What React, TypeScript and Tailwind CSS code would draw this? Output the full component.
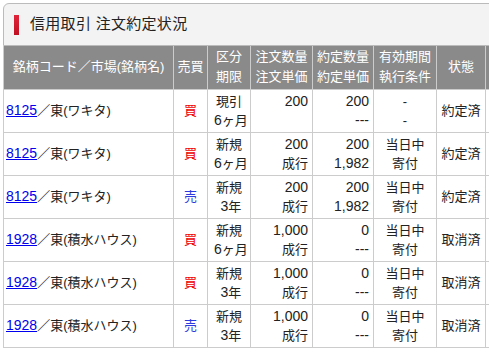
import React from "react";

type Row = {
  code: string;
  name: string;
  side: "買" | "売";
  kind: [string, string];
  qty: [string, string];
  done: [string, string];
  cond: [string, string];
  status: string;
};

const rows: Row[] = [
  { code: "8125", name: "東(ワキタ)", side: "買", kind: ["現引", "6ヶ月"], qty: ["200", ""], done: ["200", "---"], cond: ["-", "-"], status: "約定済" },
  { code: "8125", name: "東(ワキタ)", side: "買", kind: ["新規", "6ヶ月"], qty: ["200", "成行"], done: ["200", "1,982"], cond: ["当日中", "寄付"], status: "約定済" },
  { code: "8125", name: "東(ワキタ)", side: "売", kind: ["新規", "3年"], qty: ["200", "成行"], done: ["200", "1,982"], cond: ["当日中", "寄付"], status: "約定済" },
  { code: "1928", name: "東(積水ハウス)", side: "買", kind: ["新規", "6ヶ月"], qty: ["1,000", "成行"], done: ["0", "---"], cond: ["当日中", "寄付"], status: "取消済" },
  { code: "1928", name: "東(積水ハウス)", side: "買", kind: ["新規", "3年"], qty: ["1,000", "成行"], done: ["0", "---"], cond: ["当日中", "寄付"], status: "取消済" },
  { code: "1928", name: "東(積水ハウス)", side: "売", kind: ["新規", "3年"], qty: ["1,000", "成行"], done: ["0", "---"], cond: ["当日中", "寄付"], status: "取消済" },
];

const th = "border border-[#cccccc] bg-[#8a8a8a] text-white font-normal text-center align-middle px-[2px] leading-[20px]";
const td = "border border-[#cccccc] align-middle leading-[19px] text-[#222222]";

function T({ s }: { s: string }) {
  if (!s) return <>{"\u00a0"}</>;
  if (/^[\x00-\x7f]+$/.test(s)) return <span className="text-[14px]">{s}</span>;
  return <>{s}</>;
}

export default function App() {
  return (
    <div
      className="w-[489px] h-[352px] overflow-hidden bg-white pt-[3px] pl-[3px]"
      style={{ fontFamily: '"Liberation Sans", "Noto Sans CJK JP", sans-serif' }}
    >
      <div className="w-[560px]">
        <div className="h-[43px] border border-[#bbbbbb] rounded-tl-[6px] bg-[#f3f3f3] flex items-center pl-[10px] gap-[11px]">
          <div className="w-[5px] h-[20px] bg-gradient-to-b from-[#e0243a] to-[#c00f22]" />
          <span className="text-[15px] text-[#222222] tracking-[0.3px]">信用取引 注文約定状況</span>
        </div>
        <table className="table-fixed border-collapse text-[13px]" style={{ width: 553 }}>
          <colgroup>
            <col className="w-[170px]" />
            <col className="w-[34px]" />
            <col className="w-[43px]" />
            <col className="w-[62px]" />
            <col className="w-[61px]" />
            <col className="w-[63px]" />
            <col className="w-[49px]" />
            <col className="w-[71px]" />
          </colgroup>
          <thead>
            <tr className="h-[43px]">
              <th className={th + " border-t-0"}>銘柄コード／市場(銘柄名)</th>
              <th className={th + " border-t-0"}>売買</th>
              <th className={th + " border-t-0"}>区分<br />期限</th>
              <th className={th + " border-t-0"}>注文数量<br />注文単価</th>
              <th className={th + " border-t-0"}>約定数量<br />約定単価</th>
              <th className={th + " border-t-0"}>有効期間<br />執行条件</th>
              <th className={th + " border-t-0"}>状態</th>
              <th className={th + " border-t-0"}>売買<br />訂正</th>
            </tr>
          </thead>
          <tbody>
            {rows.map((r, i) => (
              <tr key={i} className="h-[43px]">
                <td className={td + " text-left pl-[2px] whitespace-nowrap"}>
                  <a href="#" className="text-[#0000ee] underline text-[14px]">{r.code}</a>
                  <span>／{r.name}</span>
                </td>
                <td className={td + " text-center"}>
                  <span className={r.side === "買" ? "text-[#ee0000]" : "text-[#2b3be0]"}>{r.side}</span>
                </td>
                <td className={td + " text-center"}>{r.kind[0]}<br /><T s={r.kind[1].startsWith("6") ? "" : ""} />{r.kind[1].startsWith("6") ? <><span className="text-[14px]">6</span>ヶ月</> : <><span className="text-[14px]">3</span>年</>}</td>
                <td className={td + " text-right pr-[4px]"}><T s={r.qty[0]} /><br /><T s={r.qty[1]} /></td>
                <td className={td + " text-right pr-[4px]"}><T s={r.done[0]} /><br /><T s={r.done[1]} /></td>
                <td className={td + " text-center"}>{r.cond[0]}<br />{r.cond[1]}</td>
                <td className={td + " text-center"}>{r.status}</td>
                <td className={td}></td>
              </tr>
            ))}
          </tbody>
        </table>
      </div>
    </div>
  );
}
